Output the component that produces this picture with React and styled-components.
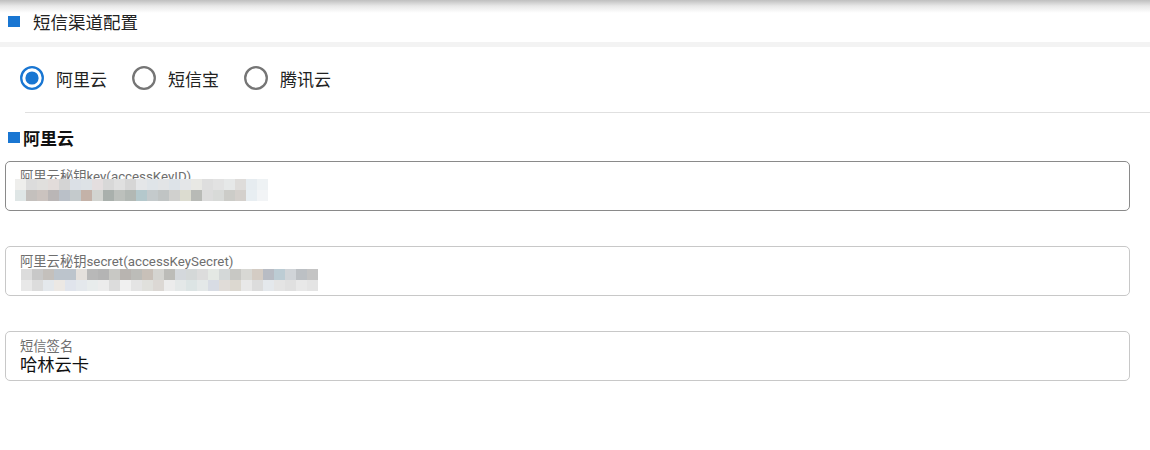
import React, { useState } from "react";
import styled, { createGlobalStyle } from "styled-components";

const GlobalStyle = createGlobalStyle`
	html, body {
		margin: 0;
		padding: 0;
		background: #fff;
	}
	body {
		font-family: Roboto, "Noto Sans CJK SC", sans-serif;
		color: #111;
	}
`;

const Page = styled.div`
	width: 1150px;
	height: 450px;
	background: linear-gradient(to bottom, #bfbfbf 0, #e8e8e8 6px, #fff 13px) no-repeat;
	background-size: 100% 14px;
	background-color: #fff;
`;

const Header = styled.div`
	height: 42px;
	display: flex;
	align-items: center;
	padding-left: 8px;
	gap: 13px;
	font-size: 17.5px;
	color: #222;
`;

const Square = styled.span`
	width: 12px;
	height: 11px;
	background: #1976d2;
	flex-shrink: 0;
`;

const Band = styled.div`
	height: 5px;
	background: #f3f3f3;
`;

const RadioGroup = styled.div`
	height: 62px;
	display: flex;
	align-items: center;
	padding-left: 19px;
	padding-bottom: 3px;
`;

const RadioItem = styled.label`
	display: flex;
	align-items: center;
	gap: 11px;
	margin-right: 24px;
	font-size: 17px;
	color: #222;
	cursor: pointer;
`;

const Divider = styled.div`
	height: 1px;
	margin-left: 25px;
	background: #e0e0e0;
`;

const SectionTitle = styled.div`
	display: flex;
	align-items: center;
	gap: 3px;
	padding-left: 8px;
	height: 48px;
	font-size: 17px;
	font-weight: 700;
	color: #111;
`;

const Fields = styled.div`
	display: flex;
	flex-direction: column;
	gap: 35px;
	padding: 0 20px 0 5px;
`;

const Field = styled.div`
	height: 50px;
	box-sizing: border-box;
	border: 1px solid ${(p) => (p.$active ? "#8a8a8a" : "#c8c8c8")};
	border-radius: 5px;
	padding: 7px 14px 0;
	overflow: hidden;
`;

const Label = styled.div`
	font-size: 13.3px;
	line-height: 15px;
	color: #6e6e6e;
	white-space: nowrap;
`;

const Value = styled.div`
	font-size: 17.3px;
	line-height: 20px;
	margin-top: 1px;
	color: #111;
`;

const Mosaic = styled.div`
	display: grid;
	grid-template-columns: repeat(${(p) => p.$cols}, 11px);
	grid-auto-rows: 11px;
	margin-left: ${(p) => p.$offset}px;
	margin-top: ${(p) => p.$top}px;
	width: max-content;
	filter: blur(0.4px);
`;

const Cell = styled.span`
	background: ${(p) => p.$c};
`;

const keyTop = [
	"#eeeeec", "#dcdcdc", "#e0dfdd", "#e2dcda", "#d4d4d4", "#dbe0e6", "#dde2e6", "#e4dedf",
	"#d8d8d8", "#e0e0e0", "#d6d6d6", "#e4e6e8", "#dfe4e8", "#e2e4e6", "#dde3e8", "#e4e6e8",
	"#e8e8e4", "#dedede", "#e2e2e2", "#e6e8e8", "#dedcda", "#e6ecf0", "#eef2f4",
];
const keyBottom = [
	"#dfe6e6", "#c4c0bd", "#cbc3bf", "#bab6b6", "#bac0c8", "#c4cacc", "#c4b2a8", "#d2d4d0",
	"#a9b0ac", "#bcc0bc", "#b2b8b4", "#b4c8cc", "#c4cacc", "#c0c4c4", "#d0d0ce", "#dcdcd0",
	"#b8bab6", "#dcdcdc", "#d8dad8", "#ccccc8", "#d4d0cc", "#e8eef2", "#f2f4f6",
];
const secretTop = [
	"#dcdcdc", "#c8c8c8", "#c4c0bc", "#bcc4cc", "#bcc4cc", "#e4e0dc", "#b8b8b8", "#b4b4b4",
	"#c8c8c4", "#b8b4b0", "#bcbcb8", "#c8c0b8", "#d4d4d0", "#bcbcb8", "#d4d8dc", "#d4d8d8",
	"#dcdcdc", "#e4e8e4", "#d4d8d8", "#c8c8c4", "#d8d8d4", "#d4ccc4", "#b8bcc4", "#bcccd4",
	"#d0d4d8", "#bcc0c4", "#c4c4c4",
];
const secretBottom = [
	"#e8e8e8", "#dcdcdc", "#e4e8ec", "#ece8e4", "#e0e4ec", "#e4e8ec", "#e8ecec", "#ececec",
	"#dcdcdc", "#f0f0f0", "#e4e4e4", "#e0e0dc", "#dcd8d4", "#ececec", "#e4e8e8", "#dce4e4",
	"#e4e8e8", "#d8dce4", "#e0dcd8", "#dcd8d0", "#e8e8e8", "#dcdcdc", "#e4e8ec", "#e4e4e4",
	"#e0e0e0", "#e8e8e8", "#e4e4e4",
];

const RadioIcon = ({ checked }) => (
	<svg width="26" height="26" viewBox="0 0 26 26">
		<circle
			cx="13"
			cy="13"
			r="10.8"
			fill="none"
			stroke={checked ? "#1976d2" : "#757575"}
			strokeWidth="2.3"
		/>
		{checked && <circle cx="13" cy="13" r="6.6" fill="#1976d2" />}
	</svg>
);

const Blurred = ({ top, bottom, offset, marginTop }) => (
	<Mosaic $cols={top.length} $offset={offset} $top={marginTop}>
		{top.map((c, i) => (
			<Cell key={"t" + i} $c={c} />
		))}
		{bottom.map((c, i) => (
			<Cell key={"b" + i} $c={c} />
		))}
	</Mosaic>
);

const channels = ["阿里云", "短信宝", "腾讯云"];

const App = () => {
	const [channel, setChannel] = useState("阿里云");

	return (
		<Page>
			<GlobalStyle />
			<Header>
				<Square />
				短信渠道配置
			</Header>
			<Band />

			<RadioGroup>
				{channels.map((name) => (
					<RadioItem key={name} onClick={() => setChannel(name)}>
						<RadioIcon checked={channel === name} />
						{name}
					</RadioItem>
				))}
			</RadioGroup>
			<Divider />

			<SectionTitle>
				<Square />
				阿里云
			</SectionTitle>

			<Fields>
				<Field $active>
					<Label>阿里云秘钥key(accessKeyID)</Label>
					<Blurred top={keyTop} bottom={keyBottom} offset={-5} marginTop={-5} />
				</Field>
				<Field>
					<Label>阿里云秘钥secret(accessKeySecret)</Label>
					<Blurred top={secretTop} bottom={secretBottom} offset={1} marginTop={0} />
				</Field>
				<Field>
					<Label>短信签名</Label>
					<Value>哈林云卡</Value>
				</Field>
			</Fields>
		</Page>
	);
};

export default App;
